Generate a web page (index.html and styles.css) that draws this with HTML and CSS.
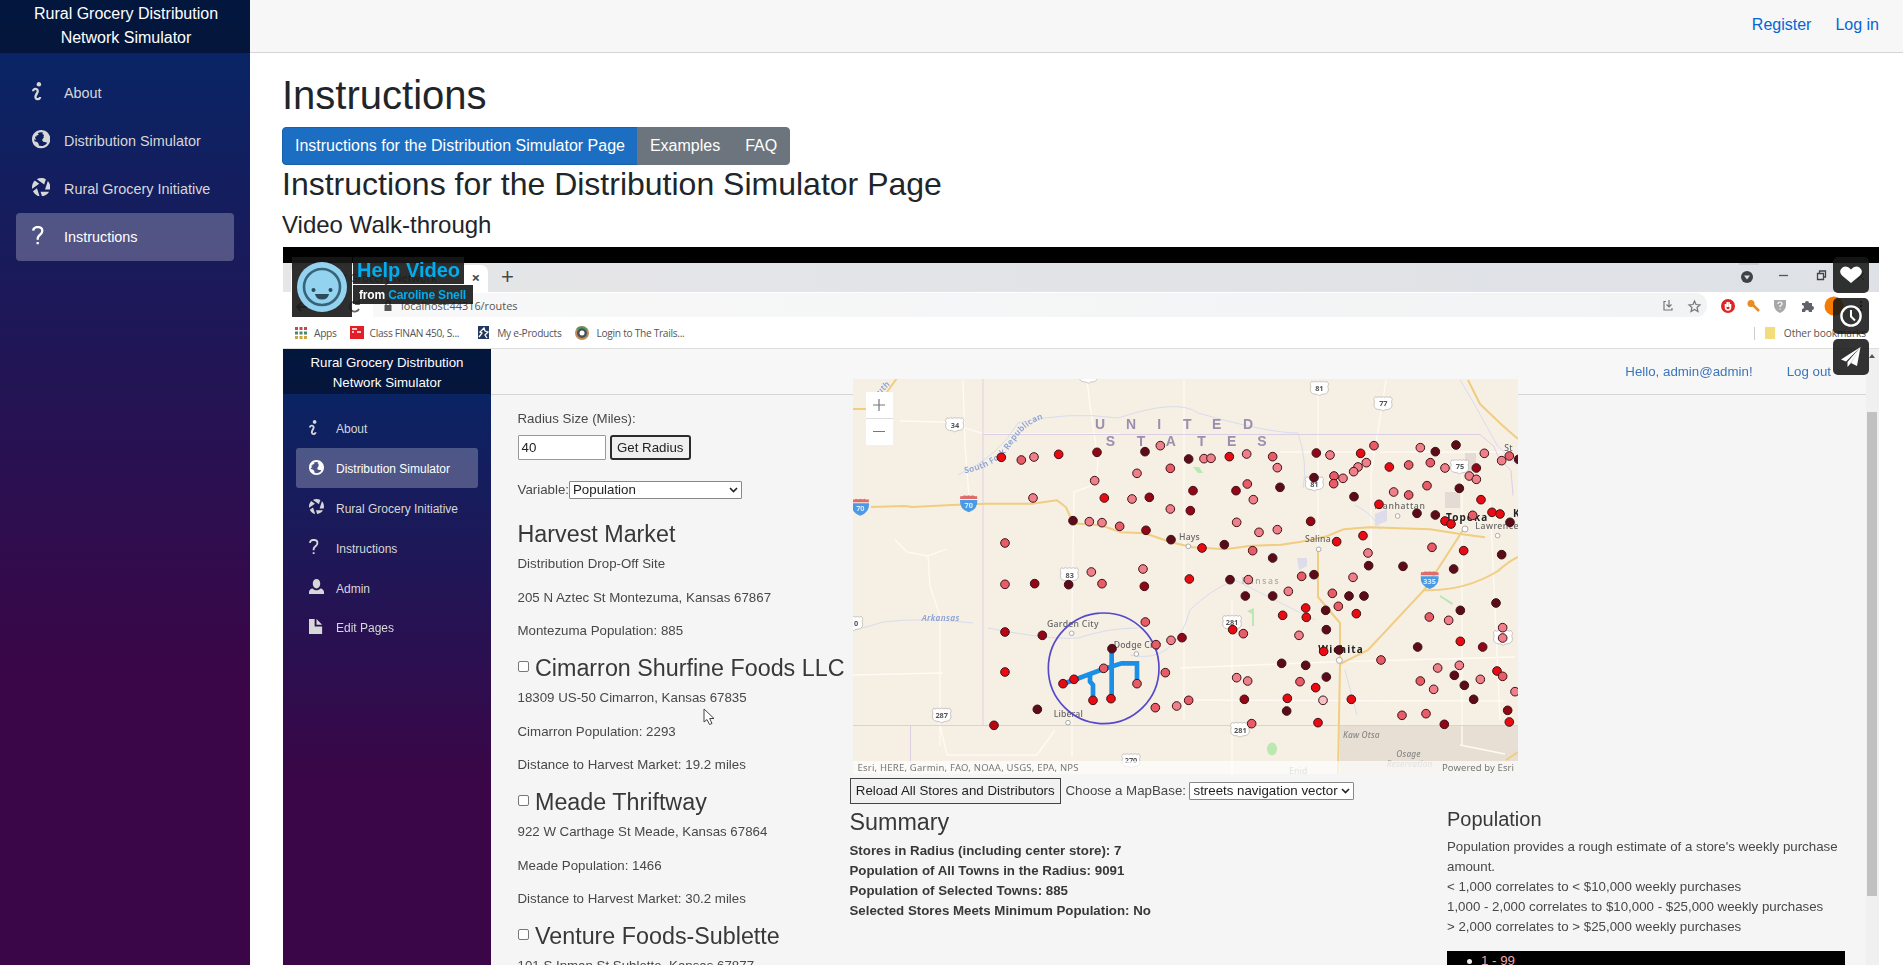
FILE: index.html
```html
<!DOCTYPE html>
<html lang="en">
<head>
<meta charset="utf-8">
<title>Instructions</title>
<link rel="stylesheet" href="styles.css">
</head>
<body>
<svg class="defs" width="0" height="0">
  <symbol id="info" viewBox="0 0 8 8"><path d="M3 0c-.55 0-1 .45-1 1s.45 1 1 1 1-.45 1-1-.45-1-1-1zm-1.5 2.5c-.83 0-1.5.67-1.5 1.5h1c0-.28.22-.5.5-.5s.5.22.5.5-1 1.64-1 2.5c0 .86.67 1.5 1.5 1.5s1.5-.67 1.5-1.5h-1c0 .28-.22.5-.5.5s-.5-.22-.5-.5c0-.36 1-1.84 1-2.5 0-.81-.67-1.5-1.5-1.5z"/></symbol>
  <symbol id="globe" viewBox="0 0 8 8"><path d="M4 0c-2.21 0-4 1.79-4 4s1.79 4 4 4 4-1.79 4-4-1.79-4-4-4zm0 1c.33 0 .64.09.94.19-.21.2-.45.38-.41.56.04.18.69.13.69.5 0 .27-.42.35-.13.66.35.35-.64.98-.66 1.44-.03.83.84.97 1.53.97.42 0 .53.2.5.44-.54.77-1.46 1.25-2.47 1.25-.38 0-.73-.09-1.06-.22.22-.44-.28-1.31-.75-1.59-.23-.23-.72-.14-1-.25-.09-.27-.18-.54-.19-.84.03-.05.08-.09.16-.09.19 0 .45.38.59.34.18-.04-.74-1.31-.31-1.56.2-.12.6.39.47-.16-.12-.51.36-.28.66-.41.26-.11.45-.41.13-.59-.06-.03-.13-.1-.22-.19.45-.27.97-.44 1.53-.44z"/></symbol>
  <symbol id="aperture" viewBox="0 0 8 8"><path d="M4 0c-.69 0-1.34.19-1.91.5l3.22 2.34.75-2.25c-.6-.36-1.31-.59-2.06-.59zm-2.75 1.13c-.76.73-1.25 1.74-1.25 2.88 0 .25.02.48.06.72l3.09-2.22-1.91-1.38zm5.63.13l-1.22 3.75h2.19c.08-.32.13-.65.13-1 0-1.07-.41-2.03-1.09-2.75zm-4.72 3.22l-1.75 1.25c.55 1.13 1.6 1.99 2.88 2.22l-1.13-3.47zm1.56 1.53l.63 1.97c1.33-.12 2.46-.88 3.09-1.97h-3.72z"/></symbol>
  <symbol id="question" viewBox="0 0 8 8"><path d="M2.47 0c-.85 0-1.48.26-1.88.66-.4.4-.54.9-.59 1.28l1 .13c.04-.25.12-.5.31-.69.19-.19.49-.38 1.16-.38.66 0 1.02.16 1.22.34.2.18.28.4.28.66 0 .83-.34 1.06-.84 1.5-.5.44-1.16 1.08-1.16 2.25v.25h1v-.25c0-.83.31-1.06.81-1.5.5-.44 1.19-1.08 1.19-2.25 0-.48-.17-1.02-.59-1.41-.43-.39-1.07-.59-1.91-.59zm-.5 7v1h1v-1h-1z"/></symbol>
  <symbol id="person" viewBox="0 0 8 8"><path d="M4 0c-1.1 0-2 1.12-2 2.5s.9 2.5 2 2.5 2-1.12 2-2.5-.9-2.5-2-2.5zm-2.09 5c-1.06.05-1.91.92-1.91 2v1h8v-1c0-1.08-.84-1.95-1.91-2-.54.61-1.28 1-2.09 1-.81 0-1.55-.39-2.09-1z"/></symbol>
  <symbol id="file" viewBox="0 0 8 8"><path d="M0 0v8h7v-4h-4v-4h-3zm4 0v3h3l-3-3z"/></symbol>
  <symbol id="us" viewBox="0 0 60 48"><path d="M7 3Q12 8 18 3Q24 7 30 3Q36 7 42 3Q48 8 53 3L58 11Q53 17 57 26Q58 38 46 41Q36 41 30 46Q24 41 14 41Q2 38 3 26Q7 17 2 11Z" fill="#fff" stroke="#b3aeaa" stroke-width="2"/></symbol>
  <symbol id="interstate" viewBox="0 0 56 54"><path d="M2 16H54Q56 44 28 53Q0 44 2 16Z" fill="#4a9ae6"/><path d="M3 4Q10 6 15 2Q22 5 28 2Q34 5 41 2Q46 6 53 4L54 13H2Z" fill="#de6c68"/></symbol>
</svg>

<div class="page">
  <aside class="sidebar">
    <div class="brand">Rural Grocery Distribution<br>Network Simulator</div>
    <nav class="nav">
      <a class="nav-link"><svg><use href="#info"/></svg>About</a>
      <a class="nav-link"><svg><use href="#globe"/></svg>Distribution Simulator</a>
      <a class="nav-link"><svg><use href="#aperture"/></svg>Rural Grocery Initiative</a>
      <a class="nav-link active"><svg><use href="#question"/></svg>Instructions</a>
    </nav>
  </aside>

  <main class="main">
    <div class="top-row"><a>Register</a><a>Log in</a></div>
    <div class="content">
      <h1>Instructions</h1>
      <div class="btn-group">
        <button class="btn primary">Instructions for the Distribution Simulator Page</button><button class="btn">Examples</button><button class="btn">FAQ</button>
      </div>
      <h2>Instructions for the Distribution Simulator Page</h2>
      <h4>Video Walk-through</h4>

      <section class="video">
        <div class="screen">
          <div class="tabs">
            <div class="tab"><span>Rural Grocery Network</span><b>×</b></div>
            <span class="new-tab">+</span>
            <svg class="win" width="150" height="29" viewBox="1720 263 150 29"><path d="M1739 264h20" stroke="#bbb"/><circle cx="1747" cy="277" r="6" fill="#3f4247"/><path d="M1744 275.500h6l-3 4z" fill="#dee1e6"/><path d="M1779 275.500h9" stroke="#555" stroke-width="1.300"/><path d="M1817.500 273.500h6v6h-6zM1819.500 273v-2h6v6h-2" fill="none" stroke="#444" stroke-width="1.300"/><path d="M1857 273l7 7m0-7l-7 7" stroke="#333"/></svg>
          </div>
          <div class="address">
            <svg class="back" width="80" height="26" viewBox="290 293 80 26" fill="none" stroke="#666" stroke-width="1.800"><path d="M307 308h-10m4-4l-4 4 4 4"/><path d="M358 304a5 5 0 1 0 1 6m0-9v4h-4"/></svg>
            <div class="url"><svg width="10" height="12" viewBox="0 0 10 12"><path d="M1.500 5h7v6h-7z" fill="#555"/><path d="M3 5V3a2 2 0 0 1 4 0v2" fill="none" stroke="#555" stroke-width="1.300"/></svg>localhost:44316/routes</div>
            <svg class="tools" width="220" height="26" viewBox="1655 292 220 26"><g fill="none" stroke="#777" stroke-width="1.200"><path d="M1666 301.500h-2v8.500h8v-2M1669 300v7m-2.500-2.500l2.500 2.500 2.500-2.500"/><path d="M1694.500 301l1.500 3.500 4 .4-3 2.600 1 4-3.500-2.100-3.500 2.100 1-4-3-2.600 4-.4z"/></g><circle cx="1728" cy="306" r="7" fill="#dc2626"/><path d="M1725.500 304v3q0 3 2.500 3t2.500-3v-3M1727.200 302v5m1.800-5v5" stroke="#fff" stroke-width="1.600" fill="none"/><path d="M1752 304l7 7" stroke="#e98c1e" stroke-width="2.500"/><circle cx="1751" cy="303.500" r="3.500" fill="#e98c1e"/><path d="M1774 300h12v6q-1 5-6 7q-5-2-6-7z" fill="#a8a8a8"/><path d="M1778 304q0-2 2-2t2 2q0 1-2 2v1m0 1.500v1" stroke="#fff" stroke-width="1.200" fill="none"/><path d="M1802 303h3a2 2 0 1 1 4 0h3v3a2 2 0 1 1 0 4v2h-3a2 2 0 0 0-4 0h-3v-3a2 2 0 0 0 0-4z" fill="#5f6368"/><circle cx="1834" cy="306" r="9.500" fill="#f57c00"/><g fill="#333"><circle cx="1861" cy="302" r="1.200"/><circle cx="1861" cy="306" r="1.200"/><circle cx="1861" cy="310" r="1.200"/></g></svg>
          </div>
          <div class="bookmarks">
            <span class="bm"><svg width="12" height="12" viewBox="0 0 12 12"><path d="M0 1.500h12" stroke="#c24a4a" stroke-width="3" stroke-dasharray="3 1.500"/><path d="M0 6h12" stroke="#4a8a6a" stroke-width="3" stroke-dasharray="3 1.500"/><path d="M0 10.500h12" stroke="#c9a640" stroke-width="3" stroke-dasharray="3 1.500"/></svg>Apps</span>
            <span class="bm bm2"><svg width="14" height="13" viewBox="0 0 14 13"><path d="M0 0h14v13H0z" fill="#e21f26"/><path d="M2 3h5M2 6h2m3 0h4" stroke="#fff" stroke-width="1.500"/></svg>Class FINAN 450, S...</span>
            <span class="bm bm3"><svg width="11" height="13" viewBox="0 0 11 13"><path d="M0 0h11v13H0z" fill="#22375e"/><path d="M1 11l3-4-2-1 4-4 1 3 3 1-3 3 2 3" stroke="#fff" stroke-width="1.300" fill="none"/></svg>My e-Products</span>
            <span class="bm bm4"><svg width="14" height="14" viewBox="0 0 14 14"><circle cx="7" cy="7" r="6" fill="#46515a" stroke="#c08b55" stroke-width="2"/><path d="M2 3q5-4 10 1" stroke="#4a9b62" stroke-width="2" fill="none"/><circle cx="7" cy="7" r="2.500" fill="#fff"/></svg>Login to The Trails...</span>
            <span class="bm other"><svg width="10" height="12" viewBox="0 0 10 12"><path d="M0 0h10v12H0z" fill="#f3dc7b"/></svg>Other bookmarks</span>
          </div>

          <div class="app">
            <div class="app-side">
              <div class="app-brand">Rural Grocery Distribution<br>Network Simulator</div>
              <div class="app-nav">
                <a><svg><use href="#info"/></svg>About</a>
                <a class="active"><svg><use href="#globe"/></svg>Distribution Simulator</a>
                <a><svg><use href="#aperture"/></svg>Rural Grocery Initiative</a>
                <a><svg><use href="#question"/></svg>Instructions</a>
                <a><svg><use href="#person"/></svg>Admin</a>
                <a><svg><use href="#file"/></svg>Edit Pages</a>
              </div>
            </div>
            <div class="app-main">
              <div class="app-top"><span>Hello, admin@admin!</span><span>Log out</span></div>
              <div class="cols">
                <div class="stores">
                  <div class="line">Radius Size (Miles):</div>
                  <div class="radius"><div class="input">40</div><div class="get">Get Radius</div></div>
                  <div class="variable">Variable:<div class="select">Population<svg width="9" height="6" viewBox="0 0 9 6"><path d="M1 1l3.500 3.500L8 1"/></svg></div></div>
                  <h3>Harvest Market</h3>
                  <p>Distribution Drop-Off Site</p><p>205 N Aztec St Montezuma, Kansas 67867</p><p>Montezuma Population: 885</p>
                  <h3><i class="check"></i>Cimarron Shurfine Foods LLC</h3>
                  <p>18309 US-50 Cimarron, Kansas 67835</p><p>Cimarron Population: 2293</p><p>Distance to Harvest Market: 19.2 miles</p>
                  <h3><i class="check"></i>Meade Thriftway</h3>
                  <p>922 W Carthage St Meade, Kansas 67864</p><p>Meade Population: 1466</p><p>Distance to Harvest Market: 30.2 miles</p>
                  <h3><i class="check"></i>Venture Foods-Sublette</h3>
                  <p>101 S Inman St Sublette, Kansas 67877</p>
                </div>
                <div class="middle">
                  <svg class="map" width="665" height="395" viewBox="853 379 665 395">
                    <rect x="853" y="379" width="665" height="395" fill="#f6efe4"/>
                    <path d="M1340 726H1518V774H1340Z" fill="#e7dfd3"/>
                    <g fill="#e4dcd4"><path d="M1465 453h11v18h-11zM1445 492h15v16h-15z"/></g>
                    <g fill="#dedbea"><path d="M1375 514l12-5v12l-12 5zM1297 558h10v8l-8 4z"/></g>
                    <g fill="#b9e8b0"><ellipse cx="1272" cy="749" rx="5" ry="6.500"/><path d="M1247 611l7-3v18h-2v-12zM1440 595l13 8-1 2-12-8zM1193 467l6 0 4 6-5 0z"/></g>
                    <g class="minor">
                      <path d="M963 380l2 65 4 52M900 421l45 1 40 12 135 0M1087 380l3 25 8 55-2 24-22 8-2 120v145M895 540l12 12 20 4 20-7M928 556l2 30 10 30v130M1184 380v340M1318 380v172M1386 380l-15 95v95M1380 452h130M1490 500l10 220M1462 470v275M1232 600v174M853 675l90-2M1180 668l150-6 185-5M1180 700l325 1M940 725l7 30h90l18-25M1280 452h95M1460 745l45 9"/>
                    </g>
                    <g class="river"><path d="M958 475q40-18 60-52 50-12 100-5 60-20 80-5 70 20 100 20 10 30 5 55M853 630q15-3 30-8 40-5 90 1M988 628q60 12 90 10 30-10 60-10M1130 655q45 10 60-45 20-20 45-30l80 40M1345 670l12 45M1355 505q20 10 25 25M1460 380l12 20 25 45 20 20"/></g>
                    <g class="state"><path d="M983 379V725.500M983 434.500H1480M853 725.500H1518M910.500 725.500V774M1480 434.500l14 12 5 12 12 12 2 25"/></g>
                    <g class="road">
                      <path d="M853 409h22l22-31M871 507l34-1 7 1 40-2 33-1.300h47l25-3.500 9 7 7 16 28 2 20 7 24 1 26 9 22 5 32 2 26-3.500 30-1 20-3 26-5.500 17-7 26-2 60 2 32 5 23 3M1318 549v48l22 26v41l-2 110M1340 664l28-14 57-61 40-62M1423 590q40 2 75-19 10-9 20-14M1468 380l12 24 22 21 16 14M1506 760l12-8"/>
                    </g>
                    <g transform="translate(845 370) scale(.33333)" class="lbl">
                      <g class="country"><text x="750" y="178">U</text><text x="843" y="178">N</text><text x="937" y="178">I</text><text x="782" y="228">S</text><text x="875" y="228">T</text><text x="962" y="228">A</text><text x="1014" y="178">T</text><text x="1101" y="178">E</text><text x="1194" y="178">D</text><text x="1057" y="228">T</text><text x="1146" y="228">E</text><text x="1237" y="228">S</text></g>
                      <path id="fork" d="M360 310Q460 290 500 225T600 145" fill="none"/>
                      <text class="water"><textPath href="#fork">South Fork Republican</textPath></text>
                      <text class="water" transform="translate(105 75) rotate(-45)">uth</text>
                      <text class="water it" x="230" y="754">Arkansas</text>
                      <use href="#us" x="299" y="140" width="60" height="48"/><use href="#us" x="700" y="-6" width="60" height="48"/><use href="#us" x="643" y="590" width="60" height="48"/><use href="#us" x="1393" y="30" width="60" height="50"/><use href="#us" x="1584" y="76" width="60" height="50"/><use href="#us" x="1378" y="316" width="60" height="50"/><use href="#us" x="1814" y="266" width="60" height="48"/><use href="#us" x="1130" y="733" width="62" height="50"/><use href="#us" x="1154" y="1054" width="62" height="50"/><use href="#us" x="1942" y="778" width="64" height="50"/><use href="#us" x="259" y="1010" width="62" height="52"/><use href="#us" x="-4" y="736" width="60" height="48"/><use href="#us" x="828" y="1148" width="60" height="48"/>
                      <use href="#interstate" x="18" y="384" width="56" height="54"/><use href="#interstate" x="343" y="374" width="56" height="54"/><use href="#interstate" x="1724" y="602" width="60" height="56"/>
                      <g class="num"><text x="330" y="173">34</text><text x="674" y="624">83</text><text x="1423" y="64">81</text><text x="1615" y="109">77</text><text x="1408" y="351">81</text><text x="1845" y="298">75</text><text x="1161" y="766">281</text><text x="1186" y="1088">281</text><text x="290" y="1043">287</text><text x="33" y="768">0</text><text x="858" y="1180">270</text><text class="w" x="46" y="423">70</text><text class="w" x="371" y="414">70</text><text class="w" x="1754" y="641">335</text></g>
                      <g class="city"><text x="1002" y="509">Hays</text><text x="1380" y="516">Salina</text><text x="1588" y="418" textLength="152">Manhattan</text><text class="b" x="1803" y="453" textLength="124">Topeka</text><text x="1891" y="478" textLength="130">Lawrence</text><text x="1978" y="244">St</text><text class="b" x="2004" y="440">K</text><text x="1190" y="641" class="g" textLength="112">Kansas</text><text x="606" y="771" textLength="155">Garden City</text><text x="806" y="833">Dodge City</text><text x="626" y="1040">Liberal</text><text class="b" x="1420" y="848" textLength="134">Wichita</text><text class="i" x="1494" y="1104">Kaw Otsa</text><text class="i" x="1654" y="1162">Osage</text><text class="i g" x="1625" y="1192">Reservation</text><text class="g" x="1332" y="1212">Enid</text></g>
                      <g class="town"><circle cx="1030" cy="529" r="7"/><circle cx="1421" cy="538" r="7"/><circle cx="1658" cy="438" r="7"/><circle cx="1860" cy="477" r="9"/><circle cx="1958" cy="497" r="7"/><circle cx="680" cy="790" r="7"/><circle cx="874" cy="852" r="7"/><circle cx="669" cy="1058" r="7"/><circle cx="1483" cy="871" r="9"/></g>
                      <circle cx="776" cy="895" r="166" class="ring"/>
                      <path d="M654 941L687 930L776 897L830 880H876V940M800 835V985M735 915V935L744 945V990" class="route"/>
                    </g>
                    <g transform="translate(845 370) scale(.33333)" class="dots">
                      <circle class="r" cx="469" cy="262"/><circle class="s" cx="529" cy="270"/><circle class="p" cx="567" cy="261"/><circle class="r" cx="641" cy="253"/><circle class="m" cx="756" cy="247"/><circle class="d" cx="900" cy="245"/><circle class="p" cx="946" cy="227"/><circle class="s" cx="976" cy="295"/><circle class="p" cx="876" cy="310"/><circle class="p" cx="749" cy="332"/><circle class="r" cx="778" cy="384"/><circle class="p" cx="861" cy="387"/><circle class="m" cx="913" cy="382"/><circle class="p" cx="976" cy="417"/><circle class="p" cx="564" cy="384"/><circle class="d" cx="684" cy="452"/><circle class="p" cx="733" cy="455"/><circle class="p" cx="771" cy="458"/><circle class="s" cx="824" cy="469"/><circle class="m" cx="903" cy="481"/><circle class="d" cx="978" cy="509"/><circle class="s" cx="480" cy="519"/><circle class="p" cx="739" cy="606"/><circle class="p" cx="894" cy="597"/><circle class="s" cx="480" cy="643"/><circle class="m" cx="569" cy="641"/><circle class="d" cx="671" cy="644"/><circle class="s" cx="771" cy="641"/><circle class="m" cx="898" cy="649"/>
                    </g>
                    <g transform="translate(1180 370) scale(.33333)" class="dots">
                      <circle class="d" cx="26" cy="267"/><circle class="p" cx="72" cy="266"/><circle class="p" cx="93" cy="265"/><circle class="r" cx="148" cy="260"/><circle class="p" cx="200" cy="252"/><circle class="s" cx="278" cy="260"/><circle class="p" cx="292" cy="293"/><circle class="m" cx="39" cy="362"/><circle class="s" cx="202" cy="342"/><circle class="m" cx="168" cy="362"/><circle class="d" cx="300" cy="352"/><circle class="p" cx="220" cy="389"/><circle class="m" cx="31" cy="422"/><circle class="p" cx="170" cy="457"/><circle class="p" cx="237" cy="487"/><circle class="p" cx="292" cy="479"/><circle class="d" cx="133" cy="524"/><circle class="r" cx="66" cy="534"/><circle class="s" cx="218" cy="542"/><circle class="d" cx="278" cy="564"/><circle class="r" cx="28" cy="627"/><circle class="d" cx="150" cy="629"/><circle class="p" cx="205" cy="629"/><circle class="s" cx="365" cy="619"/><circle class="d" cx="402" cy="614"/><circle class="m" cx="409" cy="249"/><circle class="p" cx="450" cy="255"/><circle class="r" cx="542" cy="250"/><circle class="s" cx="582" cy="227"/><circle class="p" cx="559" cy="278"/><circle class="p" cx="534" cy="291"/><circle class="p" cx="521" cy="305"/><circle class="p" cx="489" cy="325"/><circle class="s" cx="462" cy="318"/><circle class="s" cx="461" cy="341"/><circle class="d" cx="402" cy="323"/><circle class="d" cx="522" cy="380"/><circle class="r" cx="628" cy="291"/><circle class="s" cx="686" cy="285"/><circle class="p" cx="721" cy="233"/><circle class="d" cx="766" cy="245"/><circle class="d" cx="828" cy="225"/><circle class="s" cx="751" cy="278"/><circle class="p" cx="795" cy="294"/><circle class="m" cx="889" cy="294"/><circle class="p" cx="868" cy="318"/><circle class="p" cx="889" cy="328"/><circle class="p" cx="913" cy="250"/><circle class="p" cx="965" cy="272"/><circle class="s" cx="988" cy="258"/><circle class="d" cx="1016" cy="268"/><circle class="s" cx="741" cy="347"/><circle class="d" cx="838" cy="355"/><circle class="p" cx="641" cy="366"/><circle class="s" cx="686" cy="375"/><circle class="r" cx="597" cy="403"/><circle class="d" cx="711" cy="430"/><circle class="d" cx="766" cy="435"/><circle class="r" cx="903" cy="389"/><circle class="r" cx="936" cy="427"/><circle class="r" cx="960" cy="432"/><circle class="d" cx="990" cy="457"/><circle class="s" cx="878" cy="436"/><circle class="r" cx="795" cy="453"/><circle class="r" cx="813" cy="462"/><circle class="m" cx="392" cy="454"/><circle class="r" cx="470" cy="515"/><circle class="r" cx="549" cy="497"/><circle class="p" cx="564" cy="549"/><circle class="d" cx="566" cy="587"/><circle class="p" cx="519" cy="622"/><circle class="d" cx="669" cy="589"/><circle class="s" cx="756" cy="532"/><circle class="r" cx="851" cy="542"/><circle class="d" cx="821" cy="597"/><circle class="d" cx="965" cy="554"/>
                    </g>
                    <g transform="translate(845 580) scale(.33333)" class="dots">
                      <circle class="m2" cx="480" cy="156"/><circle class="m" cx="592" cy="166"/><circle class="s" cx="901" cy="126"/><circle class="s" cx="933" cy="194"/><circle class="p" cx="978" cy="181"/><circle class="d" cx="801" cy="206"/><circle class="s" cx="776" cy="265"/><circle class="r" cx="654" cy="311"/><circle class="r" cx="687" cy="298"/><circle class="s" cx="876" cy="311"/><circle class="r" cx="744" cy="361"/><circle class="r" cx="798" cy="356"/><circle class="r" cx="480" cy="276"/><circle class="d" cx="577" cy="388"/><circle class="m2" cx="447" cy="436"/><circle class="s" cx="961" cy="278"/><circle class="s" cx="931" cy="383"/><circle class="p" cx="995" cy="378"/>
                    </g>
                    <g transform="translate(1180 580) scale(.33333)" class="dots">
                      <circle class="m" cx="6" cy="173"/><circle class="d" cx="196" cy="48"/><circle class="d" cx="278" cy="48"/><circle class="p" cx="325" cy="34"/><circle class="s" cx="457" cy="40"/><circle class="d" cx="507" cy="48"/><circle class="d" cx="552" cy="48"/><circle class="s" cx="475" cy="79"/><circle class="r" cx="377" cy="84"/><circle class="r" cx="379" cy="112"/><circle class="r" cx="308" cy="106"/><circle class="d" cx="437" cy="91"/><circle class="r" cx="529" cy="101"/><circle class="r" cx="158" cy="149"/><circle class="s" cx="190" cy="161"/><circle class="d" cx="439" cy="149"/><circle class="p" cx="357" cy="166"/><circle class="r" cx="431" cy="214"/><circle class="d" cx="477" cy="210"/><circle class="s" cx="603" cy="240"/><circle class="d" cx="305" cy="250"/><circle class="d" cx="377" cy="256"/><circle class="d" cx="439" cy="291"/><circle class="p" cx="170" cy="293"/><circle class="p" cx="203" cy="303"/><circle class="s" cx="360" cy="305"/><circle class="r" cx="407" cy="323"/><circle class="s" cx="26" cy="361"/><circle class="m" cx="193" cy="358"/><circle class="r" cx="322" cy="355"/><circle class="l" cx="429" cy="361"/><circle class="r" cx="514" cy="358"/><circle class="d" cx="320" cy="393"/><circle class="s" cx="215" cy="431"/><circle class="r" cx="414" cy="428"/><circle class="s" cx="748" cy="111"/><circle class="p" cx="806" cy="121"/><circle class="d" cx="841" cy="91"/><circle class="d" cx="948" cy="69"/><circle class="p" cx="968" cy="143"/><circle class="p" cx="968" cy="174"/><circle class="r" cx="841" cy="184"/><circle class="d" cx="713" cy="201"/><circle class="m" cx="908" cy="201"/><circle class="p" cx="773" cy="264"/><circle class="p" cx="838" cy="256"/><circle class="d" cx="823" cy="286"/><circle class="p" cx="901" cy="298"/><circle class="r" cx="951" cy="273"/><circle class="s" cx="968" cy="289"/><circle class="s" cx="721" cy="303"/><circle class="d" cx="853" cy="316"/><circle class="p" cx="761" cy="328"/><circle class="p" cx="1005" cy="335"/><circle class="d" cx="881" cy="358"/><circle class="m" cx="983" cy="391"/><circle class="s" cx="666" cy="406"/><circle class="s" cx="738" cy="401"/><circle class="r" cx="988" cy="426"/><circle class="m" cx="793" cy="433"/>
                    </g>
                    <path d="M853 761H1518V774H853Z" fill="#fff" fill-opacity=".68"/>
                    <text class="attr" x="857.500" y="771" textLength="221">Esri, HERE, Garmin, FAO, NOAA, USGS, EPA, NPS</text>
                    <text class="attr" x="1442" y="771" textLength="72">Powered by Esri</text>
                    <path d="M866 392h27v53h-27z" fill="#fff"/><path d="M866 418.500h27" stroke="#ddd"/><path d="M873 405h12m-6-6v12M873 431.500h12" stroke="#777" stroke-width="1.200"/>
                  </svg>
                  <div class="controls"><div class="reload">Reload All Stores and Distributors</div><span>Choose a MapBase:</span><div class="select">streets navigation vector<svg width="9" height="6" viewBox="0 0 9 6"><path d="M1 1l3.500 3.500L8 1"/></svg></div></div>
                  <h3>Summary</h3>
                  <div class="line bold">Stores in Radius (including center store): 7</div>
                  <div class="line bold">Population of All Towns in the Radius: 9091</div>
                  <div class="line bold">Population of Selected Towns: 885</div>
                  <div class="line bold">Selected Stores Meets Minimum Population: No</div>
                </div>
                <div class="legend">
                  <h5>Population</h5>
                  <div class="line">Population provides a rough estimate of a store's weekly purchase amount.</div>
                  <div class="line">&lt; 1,000 correlates to &lt; $10,000 weekly purchases</div>
                  <div class="line">1,000 - 2,000 correlates to $10,000 - $25,000 weekly purchases</div>
                  <div class="line">&gt; 2,000 correlates to &gt; $25,000 weekly purchases</div>
                  <div class="ranges"><i></i>1 - 99</div>
                </div>
              </div>
            </div>
            <div class="scroll"><i class="up"></i><i class="thumb"></i></div>
          </div>
          <svg class="cursor" width="13" height="18" viewBox="0 0 13 18"><path d="M1 1v13l3-2.500 2.500 5 2.500-1-2.300-5H11z" fill="#fff" stroke="#444"/></svg>
        </div>

        <div class="player-title">
          <svg class="avatar" width="60" height="60" viewBox="0 0 60 60"><circle cx="30" cy="30" r="25" fill="#93d3ef"/><circle cx="30" cy="30" r="18" fill="none" stroke="#37647a" stroke-width="2.600"/><circle cx="21.500" cy="33" r="2" fill="#2b4a5a"/><circle cx="38.500" cy="33" r="2" fill="#2b4a5a"/><path d="M23 37h14q-1 5.500-7 5.500T23 37z" fill="#2b4a5a"/></svg>
          <div class="titles"><div class="t1">Help Video</div><div class="t2">from <span>Caroline Snell</span></div></div>
        </div>
        <div class="player-actions">
          <div><svg width="24" height="24" viewBox="0 0 24 24"><path d="M12 20L3 12.500Q-1 8 3.500 4.500 8 2 12 6.500 16 2 20.500 4.500 25 8 21 12.500z" fill="#fff"/></svg></div>
          <div><svg width="24" height="24" viewBox="0 0 24 24" fill="none" stroke="#fff"><circle cx="12" cy="12" r="9.600" stroke-width="2.400"/><path d="M12 6v6.500l4 4" stroke-width="2"/></svg></div>
          <div><svg width="24" height="24" viewBox="0 0 24 24" fill="#fff"><path d="M21.500 2L2 14.500l5 2zM21.500 2L8.500 17v5l3-3.500zM21.500 2l-9.500 16 6 3z"/></svg></div>
        </div>
      </section>
    </div>
  </main>
</div>
</body>
</html>
```

FILE: styles.css
```css
* { box-sizing: border-box; }
body { margin: 0; font: 16px/1.5 "Liberation Sans", Arial, sans-serif; color: #212529; background: #fff; overflow: hidden; }
h1, h2, h3, h4, h5, p { margin: 0; font-weight: 400; line-height: 1.2; }
button { font: inherit; }
.defs { position: absolute; }

.page { display: flex; height: 965px; }
.sidebar { width: 250px; flex: none; background: linear-gradient(180deg, #052767 0%, #3a0647 70%); }
.brand { height: 53px; background: rgba(0, 0, 0, .4); color: #fff; text-align: center; padding: 2px 0 0 2px; }
.nav { padding: 16px 16px 0; }
.nav-link { display: flex; align-items: center; height: 48px; padding: 2px 0 0 16px; border-radius: 4px; font-size: 14.4px; color: #d7d7d7; }
.nav-link svg { width: 18.4px; height: 18.4px; fill: currentColor; margin: -5px 13.6px 0 0; }
.nav-link.active { background: rgba(255, 255, 255, .25); color: #fff; }

.main { flex: 1; min-width: 0; }
.top-row { height: 53px; background: #f7f7f7; border-bottom: 1px solid #d6d5d5; display: flex; justify-content: flex-end; gap: 24px; padding: 13px 24px 0 0; color: #0366d6; }
.content { padding: 18.4px 24px 0 32px; }
h1 { font-size: 40px; margin-bottom: 7.6px; }
.btn-group { display: flex; height: 38px; }
.btn { border: 1px solid #6c757d; background: #6c757d; color: #fff; padding: 6px 12px; line-height: 24px; margin-left: -1px; }
.btn:last-child { border-radius: 0 4px 4px 0; }
.btn.primary { background: #1b6ec2; border-color: #1861ac; border-radius: 4px 0 0 4px; margin: 0; }
h2 { font-size: 32px; margin: 0 0 8px; }
h4 { font-size: 24px; margin-bottom: 6.8px; }

.video { position: relative; margin-left: 1px; height: 718px; background: #000; padding-top: 16px; overflow: hidden; font-size: 13.3px; line-height: 20px; }
.screen { height: 702px; background: #f5f5f5; color: #484848; filter: blur(.4px); }
.tabs { height: 29px; background: linear-gradient(90deg, #e6e6e8, #dee1e6); display: flex; align-items: stretch; }
.tab { width: 197px; margin: 2px 0 0 8px; background: #fff; border-radius: 7px 7px 0 0; display: flex; justify-content: space-between; padding: 1px 8px 0 29px; font: 11px/23px "Open Sans", sans-serif; white-space: nowrap; }
.tab b { font-size: 15px; }
.new-tab { font: 22px/28px "Liberation Sans", sans-serif; margin-left: 13px; }
.win { margin-left: auto; margin-right: 9px; }
.address { height: 26px; background: #fff; display: flex; align-items: center; }
.back { margin-left: 7px; }
.url { flex: 1; height: 24px; margin-left: 3px; background: linear-gradient(90deg, #f8f8f8, #f1f3f4); border-radius: 0 11px 11px 0; display: flex; align-items: center; gap: 8px; padding: 2px 0 0 10px; font: 10.900px "Open Sans", sans-serif; margin-right: -52px; color: #555; }
.url svg { flex: none; }
.tools { margin-right: 4px; position: relative; }
.bookmarks { height: 31px; background: #fff; border-bottom: 1px solid #ddd; display: flex; padding: 0 13px 0 12px; font: 10.200px "Open Sans", sans-serif; letter-spacing: -.3px; color: #555; white-space: nowrap; }
.bm { display: flex; align-items: center; gap: 7px; }
.bm2 { margin-left: 13px; gap: 6px; }
.bm3 { margin-left: 19px; gap: 8px; }
.bm4 { margin-left: 14px; }
.other { margin-left: auto; border-left: 1px solid #ccc; height: 13px; margin-top: 9px; padding-left: 10px; gap: 9px; letter-spacing: -.1px; }

.app { display: flex; height: 616px; }
.app-side { width: 208px; flex: none; background: linear-gradient(180deg, #052767 0%, #3a0647 70%); color: #d7d7d7; }
.app-brand { height: 45px; background: rgba(0, 0, 0, .4); color: #fff; text-align: center; padding-top: 4px; }
.app-nav { padding: 14.500px 13px 0; }
.app-nav a { display: flex; align-items: center; height: 39.800px; padding: 2px 0 0 13px; font-size: 12px; border-radius: 3px; }
.app-nav svg { width: 15px; height: 15px; fill: currentColor; margin: -4px 12px 0 0; }
.app-nav .active { background: rgba(255, 255, 255, .25); color: #fff; }
.app-main { flex: 1; min-width: 0; }
.app-top { height: 46px; background: #f7f7f7; border-bottom: 1px solid #d6d5d5; display: flex; justify-content: flex-end; gap: 34px; padding: 13px 35px 0 0; color: #3a76bb; }
.cols { display: flex; padding-left: 26.500px; }
.stores { width: 332px; padding-top: 14px; }
.radius { display: flex; gap: 4px; margin-top: 6.500px; height: 25px; }
.input { width: 88.500px; background: #fff; border: 1px solid #999; padding: 2px 3px; border-radius: 1px; color: #222; }
.get { width: 80.500px; border: 2px solid #2b2b2b; border-radius: 3px; background: #efefef; text-align: center; line-height: 21px; color: #222; }
.variable { display: flex; align-items: center; height: 19px; margin-top: 20px; }
.select { background: #fff; border: 1px solid #888; border-radius: 1px; height: 18.500px; line-height: 16px; width: 172.500px; display: flex; align-items: center; justify-content: space-between; padding: 0 3px; color: #222; }
.select svg { fill: none; stroke: #222; stroke-width: 1.600; }
h3 { font-size: 23.300px; line-height: 28px; margin-bottom: 6px; color: #383838; white-space: nowrap; }
.variable + h3 { margin-top: 21px; }
.stores p { line-height: 20px; margin-bottom: 13.300px; white-space: nowrap; }
.check { display: inline-block; width: 11px; height: 11px; border: 1px solid #777; border-radius: 2px; background: #fff; margin-right: 6.500px; vertical-align: 4px; }
.middle { width: 597.500px; margin-top: -16px; }
.map { display: block; margin-left: 3.500px; position: relative; }
.controls { display: flex; align-items: center; height: 26px; margin-top: 4px; gap: 4.500px; white-space: nowrap; }
.controls .select { width: 165px; margin-left: -1px; }
.reload { border: 1.500px solid #444; width: 211.500px; height: 26px; line-height: 23px; text-align: center; background: #f1f1f1; color: #222; }
.middle h3 { margin-top: 4px; margin-bottom: 5.500px; }
.line { line-height: 20px; }
.bold { font-weight: 700; color: #383838; }
.legend { width: 398px; padding-top: 412px; }
.legend h5 { font-size: 20px; line-height: 24px; margin-bottom: 6.500px; color: #383838; }
.ranges { margin-top: 13.500px; height: 20px; background: #000; color: #f3a6ac; padding-left: 34px; position: relative; }
.ranges i { position: absolute; left: 20px; top: 8px; width: 5px; height: 5px; border-radius: 50%; background: #eee; }
.scroll { width: 13px; background: #f0f0f0; padding: 5px 2px 0 1px; }
.up { display: block; width: 6px; height: 4px; background: #555; clip-path: polygon(50% 0, 100% 100%, 0 100%); margin-left: 2px; }
.thumb { display: block; height: 484px; margin-top: 54px; background: #c1c1c1; }
.cursor { position: absolute; left: 420px; top: 445px; }

.minor path { fill: none; stroke: #fffaf3; stroke-width: 1.300; }
.river path { fill: none; stroke: #d8dced; stroke-width: 1; }
.state path { fill: none; stroke: #dccfe4; stroke-width: 1; }
.road path { fill: none; stroke: #f0cd80; stroke-width: 2; stroke-linejoin: round; }
.lbl text { font-family: "Noto Sans", sans-serif; }
.lbl .country text { font: 700 42px "Liberation Sans", sans-serif; fill: #9b8fae; }
.lbl .water { font-size: 25px; font-weight: 600; fill: #8aa3d3; letter-spacing: 1px; }
.lbl .it { font-style: italic; }
.num text { font-size: 22px; font-weight: 700; fill: #555; text-anchor: middle; }
.num .w { fill: #d7ebff; }
.city text { font-size: 26px; font-weight: 500; fill: #666; letter-spacing: .5px; }
.city .b { font-weight: 700; font-size: 30px; fill: #222; }
.city .i { font-style: italic; font-size: 25px; fill: #888; }
.city .g { fill: #aaa; }
.town circle { fill: #fff; stroke: #aaa; stroke-width: 3; }
.ring { fill: none; stroke: #5548c9; stroke-width: 5; }
.route { fill: none; stroke: #1b8fe8; stroke-width: 14; }
.dots circle { r: 13px; stroke: #3d1218; stroke-width: 3; }
.dots .d { fill: #5c0b19; }
.dots .m { fill: #920615; }
.dots .m2 { fill: #b80612; }
.dots .r { fill: #ea0a12; }
.dots .s { fill: #e75c67; }
.dots .p { fill: #ef808a; }
.dots .l { fill: #f4c2c4; }
.attr { font: 9.500px "Noto Sans", sans-serif; fill: #777; }

.player-title { position: absolute; left: 9px; top: 10px; display: flex; gap: 1px; font-weight: 700; }
.avatar { background: rgba(23, 23, 23, .9); }
.titles { display: flex; flex-direction: column; align-items: flex-start; gap: 1px; white-space: nowrap; }
.t1 { width: 111px; height: 27px; padding-left: 4px; background: rgba(23, 23, 23, .9); color: #00adef; font-size: 20px; line-height: 27px; }
.t2 { width: 120px; height: 19px; padding-left: 6px; background: rgba(23, 23, 23, .9); color: #fff; font-size: 12px; line-height: 20px; letter-spacing: -.16px; }
.t2 span { color: #00adef; }
.player-actions { position: absolute; right: 10px; top: 10px; display: flex; flex-direction: column; gap: 5px; }
.player-actions div { width: 36px; height: 36px; border-radius: 5px; background: rgba(23, 23, 23, .88); display: flex; align-items: center; justify-content: center; }
```
